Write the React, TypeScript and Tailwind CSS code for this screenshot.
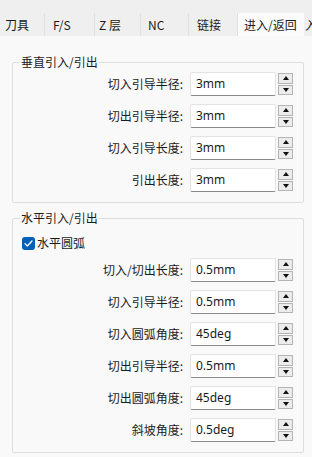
import React from "react";

const tabs = [
  { t: "刀具", w: 45, pl: 5 },
  { t: "F/S", w: 50, pl: 8 },
  { t: "Z 层", w: 46, pl: 4 },
  { t: "NC", w: 48, pl: 7 },
  { t: "链接", w: 49, pl: 8 },
  { t: "进入/返回", w: 66, pl: 6, active: true },
  { t: "入口", w: 40, pl: 1 },
];

function Spinner() {
  return (
    <div className="ml-[2px] flex flex-col w-[15px] h-[22px] gap-px">
      <div className="flex-1 border border-[#b4b4b4] bg-[#ececec] flex items-center justify-center">
        <svg width="6" height="4" viewBox="0 0 6 4"><polygon points="3,0 6,4 0,4" fill="#111" /></svg>
      </div>
      <div className="flex-1 border border-[#b4b4b4] bg-[#ececec] flex items-center justify-center">
        <svg width="6" height="4" viewBox="0 0 6 4"><polygon points="0,0 6,0 3,4" fill="#111" /></svg>
      </div>
    </div>
  );
}

function Row({ label, value }: { label: string; value: string }) {
  return (
    <div className="flex items-center h-[24px] pr-[10px]">
      <div className="flex-1 text-right leading-[16px]">{label}</div>
      <div className="ml-[7px] w-[86px] h-[24px] bg-white border border-[#e3e3e3] border-b-[#8a8a8a] rounded-[2px] flex items-center pl-[5px] font-['Noto_Sans',sans-serif] text-[12px] text-[#1a1a1a]">
        {value}
      </div>
      <Spinner />
    </div>
  );
}

function Legend({ children }: { children: React.ReactNode }) {
  return (
    <div className="absolute left-[7px] top-[-9px] px-px bg-[#f9f9f9] leading-[16px]">{children}</div>
  );
}

export default function App() {
  return (
    <div className="w-[312px] h-[457px] overflow-hidden bg-[#f9f9f9] font-['Noto_Sans_CJK_SC',sans-serif] text-[12px] text-[#1b1b1b]">
      <div className="h-[36px] bg-[#efefef] flex items-end whitespace-nowrap overflow-hidden">
        {tabs.map((tab, i) => (
          <div
            key={i}
            style={{ width: tab.w, paddingLeft: tab.pl }}
            className={
              tab.active
                ? "shrink-0 h-[23px] flex items-center bg-[#fbfbfb] leading-[16px]"
                : "shrink-0 h-[23px] flex items-center border-r border-[#e0e0e0] leading-[16px]"
            }
          >
            {tab.t}
          </div>
        ))}
      </div>

      <div className="pl-[12px] w-[304px] pt-[26px] flex flex-col">
        <div className="relative border border-[#dddddd] rounded-[2px] pt-[9px] pb-[10px] flex flex-col gap-[8px]">
          <Legend>垂直引入/引出</Legend>
          <Row label="切入引导半径:" value="3mm" />
          <Row label="切出引导半径:" value="3mm" />
          <Row label="切入引导长度:" value="3mm" />
          <Row label="引出长度:" value="3mm" />
        </div>

        <div className="relative mt-[15px] border border-[#dddddd] rounded-[2px] pt-[15px] pb-[10px] flex flex-col gap-[8px]">
          <Legend>水平引入/引出</Legend>
          <div className="flex items-center h-[18px] pl-[9px] -mb-[2px]">
            <div className="w-[13px] h-[13px] rounded-[3px] bg-[#005fb8] flex items-center justify-center">
              <svg width="9" height="7" viewBox="0 0 9 7">
                <path d="M1 3.6 L3.4 6 L8 1" stroke="white" strokeWidth="1.3" fill="none" strokeLinecap="round" strokeLinejoin="round" />
              </svg>
            </div>
            <span className="ml-[2px] leading-[16px]">水平圆弧</span>
          </div>
          <Row label="切入/切出长度:" value="0.5mm" />
          <Row label="切入引导半径:" value="0.5mm" />
          <Row label="切入圆弧角度:" value="45deg" />
          <Row label="切出引导半径:" value="0.5mm" />
          <Row label="切出圆弧角度:" value="45deg" />
          <Row label="斜坡角度:" value="0.5deg" />
        </div>
      </div>
    </div>
  );
}
